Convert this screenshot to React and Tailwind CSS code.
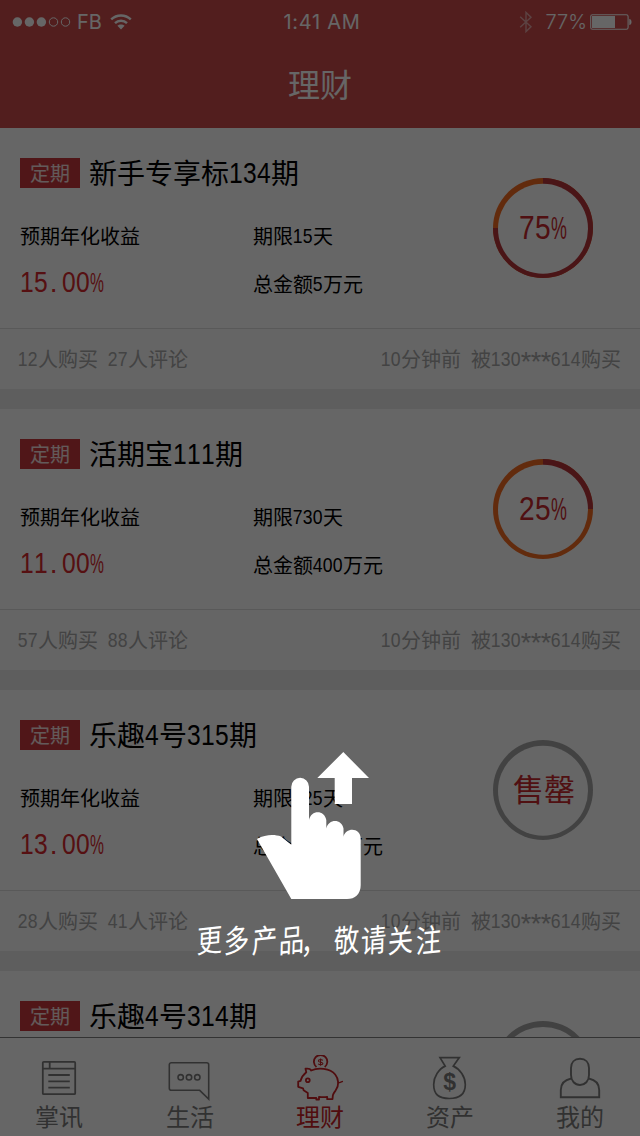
import { Fragment } from 'react'

const PRODUCTS = [
  { id: 1, name: '新手专享标134期', rate: '15.00%', days: '期限15天', total: '总金额5万元', sold: 75, buyers: '12人购买 27人评论' },
  { id: 2, name: '活期宝111期', rate: '11.00%', days: '期限730天', total: '总金额400万元', sold: 25, buyers: '57人购买 88人评论' },
  { id: 3, name: '乐趣4号315期', rate: '13.00%', days: '期限125天', total: '总金额400万元', sold: 100, buyers: '28人购买 41人评论' },
  { id: 4, name: '乐趣4号314期', sold: 100 },
]

function glyphClass(char) {
  if (char === '%') return 'inline-block origin-left -translate-y-[0.04em] scale-x-[0.56]'
  if (char === '*') return 'ml-[0.06em] inline-block translate-y-[0.07em] scale-[1.35]'
  if (char === '.') return 'ml-[0.06em] inline-block -translate-y-[0.04em]'
  return '-ml-[0.028em] inline-block -translate-y-[0.04em] scale-x-[0.88] scale-y-[1.04]'
}

// Latin characters take exactly half of a Chinese character's width
function Half({ children }) {
  return [...children].map((char, i) => {
    if (!/[\d.%* ]/.test(char)) return <Fragment key={i}>{char}</Fragment>
    return (
      <span key={i} className="inline-block w-[0.5em] font-['Liberation_Sans',sans-serif] leading-[0] whitespace-pre">
        {char === ' ' ? ' ' : <span className={glyphClass(char)}>{char}</span>}
      </span>
    )
  })
}

function Ring({ sold }) {
  const soldOut = sold >= 100
  const angle = (sold / 100) * Math.PI * 2
  const x = 50 + 50 * Math.sin(angle)
  const y = 50 - 50 * Math.cos(angle)
  return (
    <div className="grid size-[100px] place-items-center">
      <svg className="col-start-1 row-start-1 size-[100px]" viewBox="0 0 100 100">
        <circle cx="50" cy="50" r="50" fill={soldOut ? '#a6a6a6' : '#f56c22'} />
        {!soldOut && <path d={`M50 50V0A50 50 0 ${sold > 50 ? 1 : 0} 1 ${x} ${y}Z`} fill="#b9363a" />}
        <circle cx="50" cy="50.7" r="45" fill="#fff" />
      </svg>
      {soldOut
        ? <span className="z-0 col-start-1 row-start-1 mb-1 ml-[2px] text-[31px] leading-8 text-[#c8282d]">售罄</span>
        : <span className="z-0 col-start-1 row-start-1 mb-1 text-[32px] leading-8 text-[#c8282d]"><Half>{`${sold}%`}</Half></span>}
    </div>
  )
}

function ProductCard({ product }) {
  return (
    <section className="mb-5 h-[261px] shrink-0 bg-white">
      <div className="flex h-[200px] justify-between pr-[47px] pl-5">
        <div>
          <div className="mt-[30px] flex h-[30px] items-center gap-[9px]">
            <span className="flex h-[30px] w-[60px] items-center justify-center bg-[#c8393d] text-[20px] leading-none text-white/85">定期</span>
            <h2 className="mb-[2px] text-[28px] leading-[28px] whitespace-nowrap text-black"><Half>{product.name}</Half></h2>
          </div>
          {product.rate && (
            <div className="mt-[38px] grid grid-cols-[233px_1fr] items-start text-[20px] leading-5 text-black">
              <span>预期年化收益</span>
              <span className="whitespace-nowrap"><Half>{product.days}</Half></span>
              <span className="mt-[21px] text-[28px] leading-7 text-[#d7282d]"><Half>{product.rate}</Half></span>
              <span className="mt-[28px] whitespace-nowrap"><Half>{product.total}</Half></span>
            </div>
          )}
        </div>
        <div className="mt-[50px]">{product.rate ? <Ring sold={product.sold} /> : <div className="size-[100px] rounded-full border-[5px] border-t-[6px] border-b-[4px] border-[#a6a6a6]" />}</div>
      </div>
      {product.buyers && (
        <div className="flex h-[61px] items-center justify-between border-t border-[#dedede] bg-[#fcfcfc] pr-[19px] pl-[18px] text-[20px] leading-none whitespace-nowrap text-[#a8a8a8]">
          <span><Half>{product.buyers}</Half></span>
          <span><Half>10分钟前 被130***614购买</Half></span>
        </div>
      )}
    </section>
  )
}

function StatusBar() {
  return (
    <div className="flex h-[43px] items-center justify-between pr-[8px] pl-[12px] font-['Inter',sans-serif] text-[20px] leading-none">
      <div className="flex w-[200px] items-center">
        <svg className="h-[12px] w-[60px]" viewBox="0 0 60 12" fill="currentColor">
          <circle cx="5.4" cy="6" r="4.7" />
          <circle cx="17.4" cy="6" r="4.7" />
          <circle cx="29.4" cy="6" r="4.7" />
          <circle cx="41.5" cy="6" r="4.2" fill="none" stroke="currentColor" />
          <circle cx="53.5" cy="6" r="4.2" fill="none" stroke="currentColor" />
        </svg>
        <span className="ml-[5px] w-[33px]">FB</span>
        <svg className="h-[16px] w-[22px]" viewBox="0 0 22 16" fill="none" stroke="currentColor" strokeWidth="2.4">
          <path d="M1.2 5.4C6.7.1 15.3.1 20.8 5.4" />
          <path d="M5 9.1c3.3-3.2 8.7-3.2 12 0" />
          <path d="M11 15.5 7.4 11.8c2-1.8 5.2-1.8 7.2 0Z" fill="currentColor" stroke="none" />
        </svg>
      </div>
      <span className="tracking-[0.7px]">1:41 AM</span>
      <div className="flex w-[200px] items-center justify-end">
        <svg className="mr-[12px] h-[22px] w-[14px] opacity-50" viewBox="0 0 14 22" fill="none" stroke="currentColor" strokeWidth="1.4">
          <path d="M1.2 5.8 12 15.8l-5 4.8V1.4l5 4.8L1.2 16.2" />
        </svg>
        <span className="mr-[3px] font-light">77%</span>
        <svg className="h-[16px] w-[42px]" viewBox="0 0 42 16" fill="currentColor">
          <rect x=".7" y=".7" width="37.4" height="14.6" rx="1.8" fill="none" stroke="currentColor" strokeWidth="1.1" />
          <path d="M2 2h23v12H2ZM39.3 5c1.6.2 2.2 1.3 2.2 3s-.6 2.8-2.2 3Z" />
        </svg>
      </div>
    </div>
  )
}

const TABS = [
  {
    label: '掌讯',
    icon: (
      <svg className="h-[46px] w-[48px]" viewBox="0 0 48 46" fill="none" stroke="currentColor" strokeWidth="1.8">
        <rect x="7.8" y="6.8" width="32.4" height="32.4" rx="1" />
        <path d="M7.8 13.7h32.4M14.7 7v6.7M13.3 20h21.5M13.3 26.4h21.5M13.3 32.6h21.5" />
      </svg>
    ),
  },
  {
    label: '生活',
    icon: (
      <svg className="h-[46px] w-[48px]" viewBox="0 0 48 46" fill="none" stroke="currentColor" strokeWidth="1.6">
        <path d="M5.3 7.7h35.4a2 2 0 0 1 2 2V44l-9-8.7H5.3a2 2 0 0 1-2-2V9.7a2 2 0 0 1 2-2Z" />
        <circle cx="14.7" cy="22.3" r="2.7" />
        <circle cx="23" cy="22.3" r="2.7" />
        <circle cx="31.3" cy="22.3" r="2.7" />
      </svg>
    ),
  },
  {
    label: '理财',
    active: true,
    icon: (
      <svg className="h-[46px] w-[48px]" viewBox="0 0 48 46" fill="none" stroke="currentColor" strokeWidth="1.8" strokeLinejoin="round">
        <path d="M20.500 12A6.700 6.700 0 1 1 28.700 12" />
        <path d="M26.700 5.400c-.7-1.300-4.300-1.200-4.300.5s4.500.9 4.500 2.600-3.800 1.700-4.600.2M24.600 3.500v7.200" strokeWidth="1.1" />
        <path d="M15.200 15.500C22 12.300 34 13 39.200 19.500c3.700 4.600 4.100 11 .4 16-1.400 2-2.400 3.200-2.700 4.700l-.4 4h-5.300v-2.400c-3 .6-5 .5-8.200 0v2.700h-2.700v-1.500h-8.500v-5L7.600 35.300l-.6-2-4.800-1.500v-5.200l2.300-.7c1.100-4 2.700-6.300 5.800-8.700l-.8-3.500c3.300-.5 4.800 0 5.700 1.800Z" />
        <path d="M41.5 27.5c2.2.9 3.2-.8 5.5-1.2" strokeWidth="1.3" />
        <circle cx="11.8" cy="25.3" r="1.9" />
      </svg>
    ),
  },
  {
    label: '资产',
    icon: (
      <svg className="h-[46px] w-[48px]" viewBox="0 0 48 46" fill="none" stroke="currentColor" strokeWidth="1.7">
        <path d="M14 2.6h19.3l-6 8.5C34 14 39.3 22 39.3 29.5c0 10-5.5 14-16 14s-15.6-4-15.6-14c0-7.500 5-15.500 11.500-18.400L14 2.600Z" />
        <text x="23.7" y="35.3" textAnchor="middle" fill="currentColor" stroke="none" className="font-['Liberation_Sans',sans-serif] text-[23px] font-bold">$</text>
      </svg>
    ),
  },
  {
    label: '我的',
    icon: (
      <svg className="h-[46px] w-[48px]" viewBox="0 0 48 46" fill="none" stroke="currentColor" strokeWidth="1.9">
        <path d="M24 3.8c5.6 0 9 3.6 9 9.2v7c0 6-4 10-9 10s-9-4-9-10v-7c0-5.6 3.4-9.2 9-9.2Z" />
        <path d="M15.2 23.5C8 25 4.8 29 4.8 35v7.2h38.4V35c0-6-3.2-10-10.4-11.5" />
      </svg>
    ),
  },
]

function TabBar() {
  return (
    <nav className="h-[99px] shrink-0 overflow-hidden border-t border-[#808080] bg-white">
      <div className="-mx-[5px] flex">
        {TABS.map(tab => (
          <div key={tab.label}
            className={`flex w-[130px] flex-col items-center pt-[17px] first:[&>*]:mr-[2px] ${tab.active ? 'text-[#c92226]' : 'text-[#7c7c7c]'}`}>
            {tab.icon}
            <span className="mt-[3px] text-[24px] leading-6">{tab.label}</span>
          </div>
        ))}
      </div>
    </nav>
  )
}

function SwipeHint() {
  return (
    <div className="absolute inset-0 z-10 flex flex-col items-center bg-black/60 pt-[752px] text-white">
      <svg className="ml-[-14px] h-[147px] w-[112px]" viewBox="0 0 112 147" fill="currentColor">
        <path d="M86.3 0 112 26H95v26H77.7V26H60.3Z" />
        <path d="M0 87c9-5 18-4.5 24-2.5l10.3 8.2V34.7a8.7 8.7 0 0 1 17.7 0V68c2-10.5 15.500-10.500 17.300 0v8.500c2-10 15.500-10 17.200 0v8.200c2-9.500 17.200-9.500 17.200 2v46.500C103.700 142 98 147 90 147H34.300Z" />
      </svg>
      <p className="mt-[25px] -ml-[2px] flex text-[27px] leading-[30px] whitespace-nowrap">
        {[...'更多产品，敬请关注'].map((char, i) => (
          <span key={i} className={`w-[27.4px] scale-x-[0.94] scale-y-[1.16] -skew-x-2 -skew-y-5 text-center ${char === '，' ? '-translate-x-[5px] translate-y-[1px]' : ''}`}>{char}</span>
        ))}
      </p>
    </div>
  )
}

export default function App() {
  return (
    <div className="relative flex h-[1136px] w-[640px] flex-col overflow-hidden bg-[#ebebeb] font-['Noto_Sans_CJK_SC',sans-serif]">
      <header className="h-32 shrink-0 bg-[#cd4d4d] text-white">
        <StatusBar />
        <h1 className="mt-[24px] text-center text-[32px] leading-8">理财</h1>
      </header>
      <main className="flex min-h-0 flex-1 flex-col overflow-hidden">
        {PRODUCTS.map(p => <ProductCard key={p.id} product={p} />)}
      </main>
      <TabBar />
      <SwipeHint />
    </div>
  )
}
